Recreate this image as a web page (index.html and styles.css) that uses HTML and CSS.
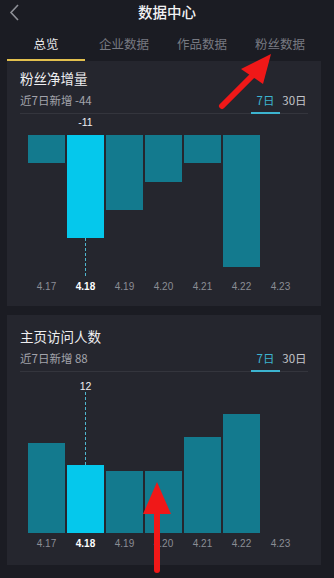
FILE: index.html
```html
<!DOCTYPE html>
<html lang="zh">
<head>
<meta charset="utf-8">
<link rel="stylesheet" href="styles.css">
</head>
<body>
<div class="page">
  <header class="topbar">
    <svg class="back" width="12" height="18" viewBox="0 0 12 18"><path d="M10 2 L3 9.5 L10 17" fill="none" stroke="#8e9097" stroke-width="1.6"/></svg>
    <div class="title">数据中心</div>
  </header>
  <nav class="tabs">
    <div class="tab active">总览</div>
    <div class="tab">企业数据</div>
    <div class="tab">作品数据</div>
    <div class="tab">粉丝数据</div>
  </nav>

  <section class="card card-first">
    <div class="card-title">粉丝净增量</div>
    <div class="sub-row">
      <div class="sub">近7日新增 -44</div>
      <div class="toggle">
        <div class="tg on">7日</div>
        <div class="tg">30日</div>
      </div>
    </div>
    <div class="chart neg">
      <div class="col"><div class="val"></div><div class="plot"><div class="bar" style="height:28px"></div></div><div class="date">4.17</div></div>
      <div class="col sel"><div class="val">-11</div><div class="plot"><div class="bar" style="height:103px"></div><div class="dash"></div></div><div class="date">4.18</div></div>
      <div class="col"><div class="val"></div><div class="plot"><div class="bar" style="height:75px"></div></div><div class="date">4.19</div></div>
      <div class="col"><div class="val"></div><div class="plot"><div class="bar" style="height:47px"></div></div><div class="date">4.20</div></div>
      <div class="col"><div class="val"></div><div class="plot"><div class="bar" style="height:28px"></div></div><div class="date">4.21</div></div>
      <div class="col"><div class="val"></div><div class="plot"><div class="bar" style="height:132px"></div></div><div class="date">4.22</div></div>
      <div class="col"><div class="val"></div><div class="plot"></div><div class="date">4.23</div></div>
    </div>
  </section>

  <section class="card card-second">
    <div class="card-title">主页访问人数</div>
    <div class="sub-row">
      <div class="sub">近7日新增 88</div>
      <div class="toggle">
        <div class="tg on">7日</div>
        <div class="tg">30日</div>
      </div>
    </div>
    <div class="chart pos">
      <div class="col"><div class="val"></div><div class="plot"><div class="bar" style="height:90px"></div></div><div class="date">4.17</div></div>
      <div class="col sel"><div class="val">12</div><div class="plot"><div class="dash"></div><div class="bar" style="height:68px"></div></div><div class="date">4.18</div></div>
      <div class="col"><div class="val"></div><div class="plot"><div class="bar" style="height:62px"></div></div><div class="date">4.19</div></div>
      <div class="col"><div class="val"></div><div class="plot"><div class="bar" style="height:62px"></div></div><div class="date">4.20</div></div>
      <div class="col"><div class="val"></div><div class="plot"><div class="bar" style="height:96px"></div></div><div class="date">4.21</div></div>
      <div class="col"><div class="val"></div><div class="plot"><div class="bar" style="height:119px"></div></div><div class="date">4.22</div></div>
      <div class="col"><div class="val"></div><div class="plot"></div><div class="date">4.23</div></div>
    </div>
  </section>

  <svg class="annot" width="334" height="578" viewBox="0 0 334 578">
    <line x1="222" y1="106" x2="253" y2="75" stroke="#f01818" stroke-width="6" stroke-linecap="round"/>
    <polygon points="271,54 241,69 263,84" fill="#f01818"/>
    <line x1="157" y1="570" x2="157" y2="508" stroke="#f01818" stroke-width="6" stroke-linecap="round"/>
    <polygon points="157,482 143,514 171,514" fill="#f01818"/>
  </svg>
</div>
</body>
</html>
```

FILE: styles.css
```css
* { box-sizing: border-box; }
html, body {
  margin: 0;
  padding: 0;
  background: #1b1c23;
}
body {
  font-family: "Noto Sans CJK SC", "Noto Sans", sans-serif;
  color: #e8e8ea;
}
.page {
  position: relative;
  width: 334px;
  height: 578px;
  overflow: hidden;
}
.topbar {
  position: relative;
  height: 26px;
  display: flex;
  align-items: center;
  justify-content: center;
}
.back {
  position: absolute;
  left: 8px;
  top: 3px;
}
.title {
  font-size: 14.5px;
  font-weight: 500;
  color: #f2f2f3;
  line-height: 20px;
  margin-top: -2px;
}
.tabs {
  display: flex;
  padding: 0 7px;
  height: 35px;
}
.tab {
  width: 78px;
  text-align: center;
  font-size: 12.5px;
  line-height: 18px;
  padding-top: 9px;
  color: #777981;
  border-bottom: 2px solid transparent;
}
.tab.active {
  color: #e6e6e8;
  border-bottom-color: #e2c04e;
}
.card {
  margin: 0 13px 0 7px;
  width: 314px;
  background: #25262e;
  padding-left: 13px;
  padding-right: 13px;
}
.card-first {
  padding-top: 7px;
  padding-bottom: 13px;
}
.card-second {
  margin-top: 9px;
  padding-top: 11px;
  padding-bottom: 15px;
}
.card-title {
  font-size: 13.5px;
  line-height: 20px;
  color: #eeeef0;
}
.sub-row {
  display: flex;
  justify-content: space-between;
  height: 26px;
  border-bottom: 1px solid #34353d;
}
.sub {
  font-size: 11.5px;
  line-height: 14px;
  padding-top: 5px;
  color: #a2a3aa;
}
.toggle {
  display: flex;
  margin-right: -1px;
}
.tg {
  width: 29px;
  height: 26px;
  text-align: center;
  font-size: 11.5px;
  line-height: 14px;
  padding-top: 5px;
  color: #c4c5ca;
  border-bottom: 2px solid transparent;
}
.tg.on {
  color: #3cb3cf;
  border-bottom-color: #3cb3cf;
}
.chart {
  display: flex;
  gap: 2px;
  padding-left: 8px;
}
.col {
  width: 37px;
  display: flex;
  flex-direction: column;
  align-items: center;
}
.val {
  height: 12px;
  font-family: "Liberation Sans", Arial, sans-serif;
  font-size: 10.5px;
  line-height: 12px;
  color: #f0f0f2;
}
.neg { padding-top: 2px; }
.neg .val { margin-bottom: 7px; }
.pos { padding-top: 8px; }
.plot {
  width: 37px;
  height: 141px;
  display: flex;
  flex-direction: column;
  align-items: center;
}
.neg .plot { justify-content: flex-start; }
.pos .plot { justify-content: flex-end; }
.bar {
  width: 37px;
  background: #137a8e;
  flex: none;
}
.sel .bar { background: #05c8ec; }
.dash {
  flex: 1;
  width: 0;
  border-left: 1px dashed #4fb7cf;
}
.date {
  margin-top: 5px;
  font-family: "Liberation Sans", Arial, sans-serif;
  font-size: 10px;
  line-height: 12px;
  color: #8b8d95;
}
.sel .date {
  color: #ffffff;
  font-weight: bold;
}
.annot {
  position: absolute;
  left: 0;
  top: 0;
  pointer-events: none;
}
```
